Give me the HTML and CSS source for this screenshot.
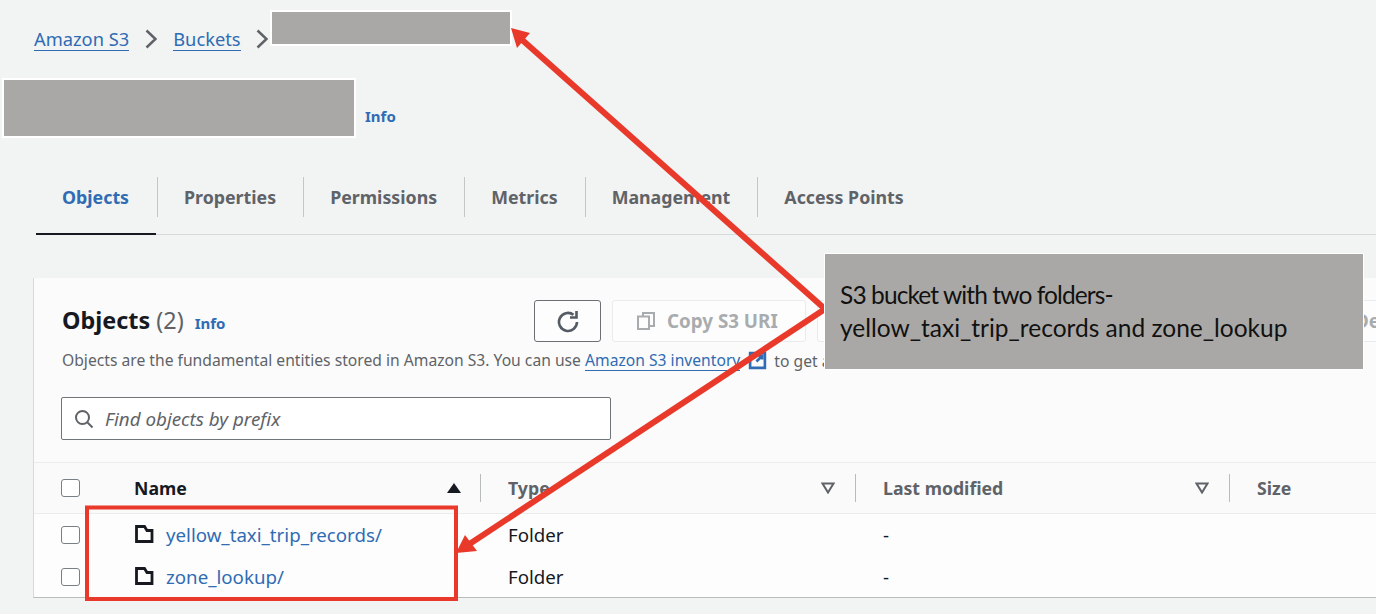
FILE: index.html
```html
<!DOCTYPE html>
<html lang="en">
	<head>
		<meta charset="UTF-8">
		<title>S3 bucket objects</title>
		<link rel="stylesheet" href="styles.css">
	</head>
	<body>
		<nav class="crumbs">
			<a href="#">Amazon S3</a>
			<svg class="chev" viewBox="0 0 12 20"><path d="M1.500 1.500 10.500 10 1.500 18.500"/></svg>
			<a href="#">Buckets</a>
			<svg class="chev" viewBox="0 0 12 20"><path d="M1.500 1.500 10.500 10 1.500 18.500"/></svg>
		</nav>
		<header class="title">
			<span class="info">Info</span>
		</header>
		<ul class="tabs">
			<li class="active">Objects</li>
			<li>Properties</li>
			<li>Permissions</li>
			<li>Metrics</li>
			<li>Management</li>
			<li>Access Points</li>
		</ul>
		<section class="card">
			<div class="card-head">
				<div class="head-row">
					<div class="head-title">
						<h2>Objects <span>(2)</span></h2>
						<span class="info">Info</span>
					</div>
					<button class="refresh">
						<svg viewBox="0 0 24 24"><path d="M21 13A9 9 0 1 1 17.500 5.800"/><path d="M20.500 2v6.500H14"/></svg>
					</button>
					<button class="off copy">
						<svg viewBox="0 0 20 20"><path d="M7 5V2h11v13h-4"/><path d="M2 5.500h11V18H2z"/></svg>
						Copy S3 URI
					</button>
					<button class="off middle"></button>
					<button class="off delete">Delete</button>
				</div>
				<p class="desc">
					<span>Objects are the fundamental entities stored in Amazon S3. You can use <a href="#">Amazon S3 inventory</a></span>
					<svg class="ext" viewBox="0 0 18 18"><path d="M2 2h14v14H2z"/><path d="M10 4.500h3.500V8M13.500 4.500 8 10"/></svg>
					<span>to get a</span>
					<span class="desc-end">he</span>
				</p>
				<div class="search">
					<svg viewBox="0 0 20 20"><circle cx="8.500" cy="8.500" r="6.500"/><path d="m13.500 13.500 5 5"/></svg>
					<span>Find objects by prefix</span>
				</div>
			</div>
			<div class="row thead">
				<span class="check"></span>
				<span class="col name">Name<i class="tri up"></i></span>
				<span class="col sep">Type<svg class="tri-open" viewBox="0 0 14 12"><path d="M1.500 1.500h11L7 10.500z"/></svg></span>
				<span class="col sep">Last modified<svg class="tri-open" viewBox="0 0 14 12"><path d="M1.500 1.500h11L7 10.500z"/></svg></span>
				<span class="col sep">Size</span>
			</div>
			<div class="row item">
				<span class="check"></span>
				<span class="col name"><svg class="folder" viewBox="0 0 20 18"><path d="M2.500 1.500h8l2.500 4h5v11H2.500z"/></svg><a href="#">yellow_taxi_trip_records/</a></span>
				<span class="col">Folder</span>
				<span class="col">-</span>
				<span class="col"></span>
			</div>
			<div class="row item">
				<span class="check"></span>
				<span class="col name"><svg class="folder" viewBox="0 0 20 18"><path d="M2.500 1.500h8l2.500 4h5v11H2.500z"/></svg><a href="#">zone_lookup/</a></span>
				<span class="col">Folder</span>
				<span class="col">-</span>
				<span class="col"></span>
			</div>
		</section>

		<!-- annotations drawn over the screenshot -->
		<div class="blank blank-crumb"></div>
		<div class="blank blank-title"></div>
		<svg class="marks" viewBox="0 0 1376 614">
			<path class="line" d="M825 309 520 38"/>
			<path class="line" d="M825 309 468 545"/>
			<path class="head" d="M511 28 530 33 517 48z"/>
			<path class="head" d="M456 553 465 535 477 551z"/>
			<rect class="box" x="87" y="507.500" width="369" height="91.500"/>
		</svg>
		<div class="note"><span class="note-first">S3 bucket with two folders-</span><br>yellow_taxi_trip_records and zone_lookup</div>
	</body>
</html>
```

FILE: styles.css
```css
html, body {
	margin: 0;
	height: 614px;
	overflow: hidden;
}

body {
	background-color: #f2f3f3;
	font-family: "Noto Sans", sans-serif;
	font-size: 14px;
	color: #16191f;
	position: relative;
}

a {
	color: #2f6cb3;
	text-decoration: none;
}

ul {
	list-style: none;
	margin: 0;
	padding: 0;
}

.crumbs {
	display: flex;
	align-items: center;
	height: 26px;
	padding: 26px 0 0 34px;
	font-size: 18.300px;
}

.crumbs a {
	border-bottom: 1px solid #2f6cb3;
	line-height: 23px;
}

.chev {
	width: 12px;
	height: 20px;
	margin: 0 16px;
	fill: none;
	stroke: #5f6368;
	stroke-width: 2.500;
}

.crumbs .chev:last-child {
	margin: 0 0 0 15px;
}

.title {
	display: flex;
	align-items: flex-end;
	height: 63px;
	padding: 0 0 0 365px;
	margin-top: 11px;
}

.info {
	color: #2f6cb3;
	font-size: 15px;
	font-weight: 700;
}

.tabs {
	display: flex;
	margin: 51px 0 0 36px;
	height: 57px;
	border-bottom: 1px solid #d5dbdb;
	align-items: flex-start;
}

.tabs li {
	padding: 0 27px 0 26px;
	height: 40px;
	line-height: 40px;
	font-size: 17.800px;
	font-weight: 700;
	color: #5f6368;
	border-left: 1px solid #c4c7c7;
}

.tabs .active {
	border-left: 0;
	color: #2f6cb3;
	height: 58px;
	box-sizing: border-box;
	width: 120px;
	margin-right: 1px;
	border-bottom: 2px solid #16191f;
}

.card {
	margin: 43px 0 0 33px;
	height: 320px;
	background-color: #fdfdfd;
	border-left: 1px solid #d5dbdb;
	border-bottom: 1px solid #b9bcbc;
	box-sizing: border-box;
	overflow: hidden;
}

.card-head {
	padding: 22px 0 0 28px;
	height: 184px;
	box-sizing: border-box;
	background-color: #fbfbfb;
}

.head-row {
	display: flex;
	align-items: center;
	gap: 11px;
	height: 42px;
}

.head-title {
	display: flex;
	align-items: center;
	flex: none;
	width: 461px;
}

h2 {
	margin: 0 0 2px;
	font-size: 23.400px;
	line-height: 40px;
	font-weight: 700;
	color: #16191f;
}

h2 span {
	font-weight: 400;
	color: #5f6368;
}

.head-title .info {
	margin: 4px 0 0 11px;
}

button {
	flex: none;
	height: 42px;
	box-sizing: border-box;
	background-color: #fdfdfd;
	border: 1px solid #6b6f73;
	border-radius: 3px;
	font: 700 18.800px "Noto Sans", sans-serif;
	white-space: nowrap;
}

.refresh {
	width: 67px;
	display: flex;
	align-items: center;
	justify-content: center;
	padding: 0;
}

.refresh svg {
	width: 24px;
	height: 24px;
	fill: none;
	stroke: #545b64;
	stroke-width: 2.600;
}

.off {
	border-color: #e9ebed;
	color: #a9acae;
	display: flex;
	align-items: center;
	justify-content: center;
	padding: 0;
}

.copy {
	width: 194px;
	gap: 11px;
	justify-content: flex-start;
	padding-left: 23px;
}

.copy svg {
	width: 20px;
	height: 20px;
	fill: none;
	stroke: #a9acae;
	stroke-width: 2;
}

.middle {
	width: 490px;
}

.delete {
	width: 120px;
	padding-left: 36px;
	justify-content: flex-start;
}

.desc {
	display: flex;
	align-items: center;
	gap: 7px;
	margin: 8px 0 0;
	font-size: 15.660px;
	line-height: 20px;
	white-space: nowrap;
	color: #5f6368;
}

.desc a {
	display: inline-block;
	line-height: 19px;
	border-bottom: 1px solid #2f6cb3;
}

.desc-end {
	position: relative;
	margin-left: 540px;
}

.ext {
	flex: none;
	width: 19px;
	height: 19px;
	margin-left: 1px;
	fill: none;
	stroke: #2f6cb3;
	stroke-width: 2.500;
}

.search {
	display: flex;
	align-items: center;
	gap: 11px;
	width: 550px;
	height: 43px;
	margin: 26px 0 0 -1px;
	padding-left: 12px;
	box-sizing: border-box;
	background-color: #fff;
	border: 1px solid #70757a;
	border-radius: 2px;
	font-size: 18.800px;
	font-style: italic;
	color: #5f6368;
}

.search svg {
	width: 20px;
	height: 20px;
	fill: none;
	stroke: #5f6368;
	stroke-width: 2;
}

.row {
	display: grid;
	grid-template-columns: 100px 346px 375px 374px 1fr;
	height: 42px;
	align-items: center;
	font-size: 18.700px;
}

.thead {
	height: 52px;
	background-color: #fafafa;
	border-top: 1px solid #eaeded;
	border-bottom: 1px solid #eaeded;
	box-sizing: border-box;
	font-size: 17.700px;
	font-weight: 700;
	color: #5f6368;
}

.thead .name {
	color: #16191f;
}

.check {
	width: 19px;
	height: 18px;
	margin-left: 27px;
	box-sizing: border-box;
	background-color: #fff;
	border: 1px solid #7a7f85;
	border-radius: 3px;
}

.col {
	display: flex;
	align-items: center;
	height: 28px;
	padding-left: 28px;
	position: relative;
}

.col.name {
	padding: 0 19px 0 0;
}

.item .col {
	margin-top: -2px;
}

.sep::before {
	content: "";
	position: absolute;
	left: 0;
	top: 0;
	height: 28px;
	border-left: 1px solid #b9bcbc;
}

.tri {
	margin-left: auto;
}

.tri.up {
	border: 7px solid transparent;
	border-top: 0;
	border-bottom: 10px solid #16191f;
}

.tri-open {
	width: 14px;
	height: 12px;
	margin-left: auto;
	margin-right: 20px;
	fill: none;
	stroke: #5f6368;
	stroke-width: 2;
}

.folder {
	flex: none;
	width: 20px;
	height: 18px;
	margin-right: 12px;
	fill: none;
	stroke: #16191f;
	stroke-width: 2.800;
}

/* annotations */

.blank {
	position: absolute;
	background-color: #aaa8a6;
	border: 2px solid #fff;
	box-sizing: border-box;
}

.blank-crumb {
	left: 270px;
	top: 10px;
	width: 242px;
	height: 36px;
}

.blank-title {
	left: 2px;
	top: 78px;
	width: 354px;
	height: 60px;
}

.marks {
	position: absolute;
	left: 0;
	top: 0;
	width: 1376px;
	height: 614px;
}

.line {
	fill: none;
	stroke: #e8392a;
	stroke-width: 6;
}

.head {
	fill: #e8392a;
}

.box {
	fill: none;
	stroke: #e8392a;
	stroke-width: 4;
}

.note {
	position: absolute;
	left: 824px;
	top: 253px;
	width: 540px;
	height: 117px;
	box-sizing: border-box;
	padding: 24px 0 0 15px;
	background-color: #aaa8a6;
	border: 1px solid #fff;
	font-family: "Lato", sans-serif;
	font-size: 24.500px;
	line-height: 33px;
	color: #111;
}

.note-first {
	letter-spacing: -0.900px;
}
```
